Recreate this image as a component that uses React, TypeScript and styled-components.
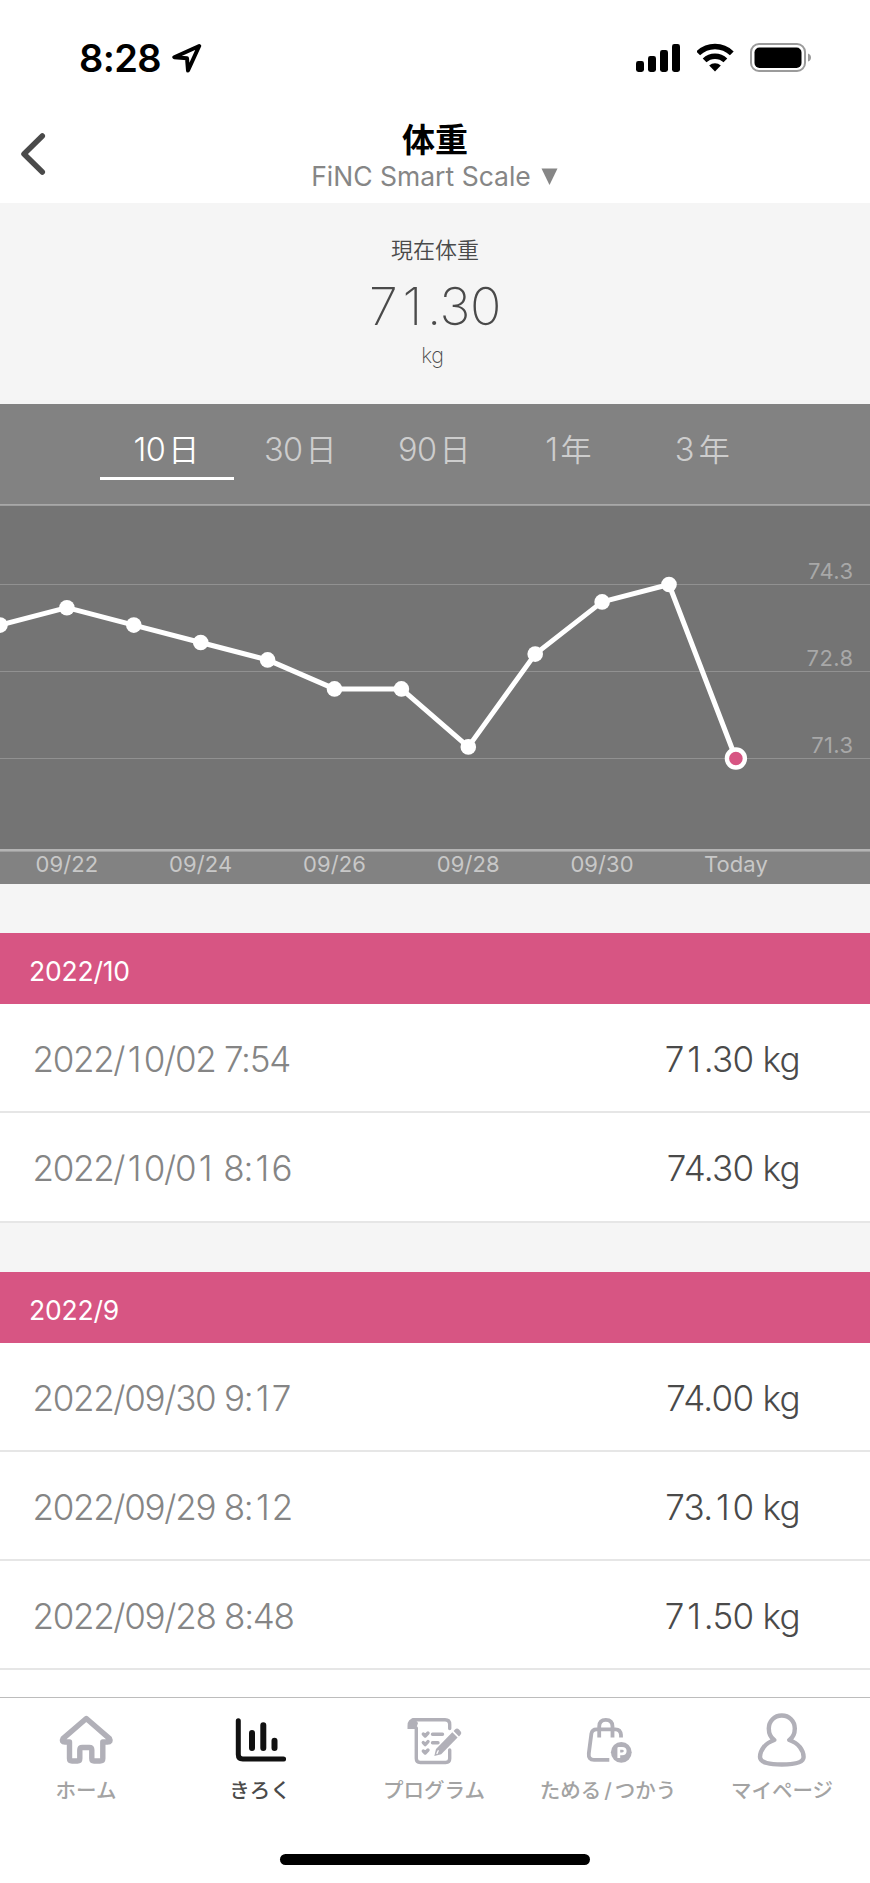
import React from 'react';
import styled, { createGlobalStyle } from 'styled-components';

const Global = createGlobalStyle`
  * { box-sizing: border-box; }
  body {
    margin: 0;
    background: #fff;
    font-family: Inter, 'Noto Sans CJK JP', sans-serif;
    -webkit-font-smoothing: antialiased;
  }
`;

const PINK = '#d75583';
const ICON_GRAY = '#b1b0b8';

const Screen = styled.div`
  width: 870px;
  height: 1883px;
  display: flex;
  flex-direction: column;
  overflow: hidden;
  background: #fff;
`;

/* Status bar */

const StatusBar = styled.div`
  height: 115px;
  flex: none;
  display: flex;
  justify-content: space-between;
  padding: 43px 58px 0 79px;
`;

const StatusGroup = styled.div<{ $gap?: number }>`
  display: flex;
  align-items: flex-start;
  gap: ${p => p.$gap ?? 0}px;
`;

const Clock = styled.span`
  font-size: 38px;
  line-height: 30px;
  font-weight: 600;
  letter-spacing: -0.6px;
  width: 93px;
  white-space: nowrap;
`;

/* Header */

const Header = styled.header`
  height: 88px;
  flex: none;
  display: grid;
  grid-template-columns: 120px 1fr 120px;
`;

const BackButton = styled.button`
  border: 0;
  background: none;
  padding: 17px 0 0 20px;
  display: flex;
  align-items: flex-start;
`;

const TitleBlock = styled.div`
  display: flex;
  flex-direction: column;
  align-items: center;
`;

const Title = styled.h1`
  margin: 6px 0 0;
  font-size: 33px;
  line-height: 38px;
  font-weight: 700;
`;

const DeviceLine = styled.div`
  display: flex;
  align-items: center;
  gap: 10px;
  margin-top: 2px;
  padding-right: 1px;
  font-size: 26.5px;
  line-height: 30px;
  color: #868686;
`;

/* Current value */

const Summary = styled.section`
  height: 201px;
  flex: none;
  background: #f5f5f5;
  color: #4a4a4a;
  display: flex;
  flex-direction: column;
  align-items: center;
`;

const SummaryLabel = styled.div`
  margin-top: 32px;
  font-size: 22px;
  line-height: 30px;
  font-weight: 350;
`;

const SummaryValue = styled.div`
  margin-top: 12px;
  font-size: 52px;
  line-height: 60px;
  font-weight: 200;
  letter-spacing: -0.4px;
`;

const SummaryUnit = styled.div`
  margin: 3px 5px 0 0;
  font-size: 21.5px;
  line-height: 30px;
  font-weight: 200;
  letter-spacing: -0.4px;
`;

/* Chart */

const ChartPanel = styled.section`
  height: 480px;
  flex: none;
  background: #828282;
`;

const RangeTabs = styled.div`
  height: 100px;
  padding: 16px 100px 0;
  display: grid;
  grid-template-columns: repeat(5, 134px);
`;

const RangeTab = styled.button<{ $active?: boolean }>`
  height: 60px;
  padding: 1px 2px 0 0;
  border: 0;
  border-bottom: 3px solid ${p => (p.$active ? '#fff' : 'transparent')};
  background: none;
  color: ${p => (p.$active ? '#fff' : '#cdcdcd')};
  font-family: inherit;
  font-size: 32.5px;
  font-weight: 350;
  line-height: 57px;
  letter-spacing: -0.6px;
  display: flex;
  justify-content: center;
`;

const RangeUnit = styled.span<{ $wide?: boolean }>`
  font-size: 31px;
  margin-left: ${p => (p.$wide ? 5 : 3)}px;
`;

const ChartSvg = styled.svg`
  display: block;
`;

/* History */

const History = styled.main`
  flex: 1;
  min-height: 0;
  overflow: hidden;
  background: #fff;
`;

const MonthHeader = styled.h2`
  margin: 0;
  height: 120px;
  border-top: 49px solid #f5f5f5;
  background: ${PINK};
  color: #fff;
  padding: 4px 29px 0;
  font-size: 26.5px;
  font-weight: 400;
  line-height: 68px;
  letter-spacing: -0.2px;
`;

const Row = styled.div`
  height: 109.3px;
  border-bottom: 2px solid #e6e6e6;
  padding: 3px 70px 0 32.5px;
  display: flex;
  justify-content: space-between;
  align-items: center;
  font-size: 35px;
  font-weight: 300;
`;

const RowDate = styled.span`
  color: #858585;
  letter-spacing: -1.3px;
`;

const RowValue = styled.span`
  color: #4a4a4a;
  letter-spacing: -0.7px;
`;

/* Gives the narrow "1" the same advance as the other digits. */
const One = styled.span`
  margin: 0 0.1em;
`;

const Figures = ({ children }: { children: string }) => (
  <>
    {children.split(/(1)/).map((part, i) => (part === '1' ? <One key={i}>1</One> : part))}
  </>
);

/* Bottom navigation */

const BottomNav = styled.nav`
  height: 186px;
  flex: none;
  border-top: 1px solid #bcbcbc;
  display: flex;
  flex-direction: column;
  align-items: center;
`;

const NavItems = styled.div`
  width: 870px;
  height: 156px;
  display: grid;
  grid-template-columns: 172px 176px 172px 176px 172px;
`;

const NavItem = styled.a<{ $active?: boolean }>`
  display: flex;
  flex-direction: column;
  align-items: center;
  font-size: 20.5px;
  font-weight: 500;
  line-height: 28px;
  white-space: nowrap;
  color: ${p => (p.$active ? '#4a4a4a' : '#a3a3a3')};
  svg { display: block; margin-bottom: 1px; }
`;

const Slash = styled.span`
  margin: 0 3px;
`;

const HomeIndicator = styled.div`
  width: 310px;
  height: 11px;
  border-radius: 6px;
  background: #000;
`;

const LocationIcon = () => (
  <svg width="30" height="30" viewBox="0 0 30 30" fill="none" stroke="#000" strokeWidth="4" strokeLinejoin="round">
    <path d="M27.2 3 L2.3 14.2 L15 15.2 L16 27.5 Z" />
  </svg>
);

const SignalIcon = () => (
  <svg width="45" height="30" viewBox="0 0 45 30">
    <rect x="0" y="18" width="8" height="11" rx="2.4" />
    <rect x="12" y="13" width="8" height="16" rx="2.4" />
    <rect x="24" y="7" width="8" height="22" rx="2.4" />
    <rect x="36" y="1" width="8" height="28" rx="2.4" />
  </svg>
);

const WifiIcon = () => (
  <svg width="38" height="30" viewBox="1 0 38 30" fill="none" stroke="#000" strokeWidth="5.4">
    <path d="M2.2 10.4 A24 24 0 0 1 35.8 10.4" />
    <path d="M8.6 17.4 A15 15 0 0 1 29.4 17.4" />
    <path d="M19 28.5 L13.2 22.6 A8.5 8.5 0 0 1 24.8 22.6 Z" fill="#000" stroke="none" />
  </svg>
);

const BatteryIcon = () => (
  <svg width="62" height="30" viewBox="0 0 62 30">
    <rect x="1" y="1" width="54" height="27" rx="8" fill="none" stroke="#9b9b9b" strokeWidth="2" />
    <rect x="4.5" y="4.5" width="47" height="20.5" rx="5" />
    <path d="M58 10.5 Q61 11.5 61 14.5 Q61 17.5 58 18.5 Z" fill="#9b9b9b" />
  </svg>
);

const HomeIcon = () => (
  <svg width="56" height="78" viewBox="0 0 56 78" fill="none" stroke={ICON_GRAY} strokeWidth="5.4" strokeLinejoin="round" strokeLinecap="round">
    <path d="M28.3 20.5 L5 40.6 Q3 44 7 44 H11.5 V60.5 Q11.5 63 14 63 H19.5 Q21.8 63 21.8 60.5 V52 Q21.8 49.5 24.3 49.5 H31.3 Q33.8 49.5 33.8 52 V60.5 Q33.8 63 36 63 H42 Q44.8 63 44.8 60.5 V44 H49.5 Q53.5 44 51.5 40.6 Z" />
  </svg>
);

const RecordIcon = () => (
  <svg width="52" height="78" viewBox="0 0 52 78" fill="none" stroke="#111" strokeLinecap="round" strokeLinejoin="round">
    <path d="M4.3 22.7 V56.5 Q4.3 61 8.8 61 H49.6" strokeWidth="5" />
    <path d="M18 35 V50 M29.3 27.3 V50 M40.5 42.7 V50" strokeWidth="6" />
  </svg>
);

const ProgramIcon = () => (
  <svg width="56" height="78" viewBox="0 0 56 78" fill="none" stroke={ICON_GRAY} strokeLinecap="round" strokeLinejoin="round" strokeWidth="3.4">
    <path d="M7 21.8 H39 Q43.7 21.8 43.7 26.5 V30.5 M43.7 52 V60.5 Q43.7 64.5 39.7 64.5 H14.3 Q10.3 64.5 10.3 60.5 V30" />
    <path d="M1.5 31 V28 Q1.5 20.3 8.5 20.3 L12 25 L10 31 Z" fill={ICON_GRAY} stroke="none" />
    <path d="M17.3 36 L19.2 38 L22 35 M17.3 44.6 L19.2 46.6 L22 43.6 M17.3 53 L19.2 55 L22 52 M26.5 36.3 H36.5 M26.5 44.7 H32" strokeWidth="3.4" />
    <path d="M28.3 58 L30 51 L46.3 34.2 L51.6 39.5 L35.2 56.3 Z" fill={ICON_GRAY} stroke="none" />
    <path d="M31 55.5 L32.2 52.8" stroke="#fff" strokeWidth="1.3" />
    <path d="M47.6 33 L49 31.6 Q51 29.6 53 31.6 L54.3 33 Q56.2 35 54.3 37 L53 38.4 Z" fill={ICON_GRAY} stroke="none" />
  </svg>
);

const BagIcon = () => (
  <svg width="48" height="78" viewBox="0 0 48 78" fill="none" stroke={ICON_GRAY} strokeLinejoin="round" strokeWidth="3.8">
    <path d="M37 39.5 V37 Q36.5 31.3 31.5 31.3 H12.5 Q8.2 31.3 7.4 35.5 L4.8 55.5 Q4.2 61.8 10 61.8 H25.3" />
    <path d="M15.2 39.5 V28.5 Q15.2 21.8 21.8 21.8 Q28.5 21.8 28.5 28.5 V39.5" />
    <circle cx="37.3" cy="54.3" r="10.4" fill={ICON_GRAY} stroke="none" />
    <path d="M34.8 60 V50.3 H38 Q41.2 50.3 41.2 53 Q41.2 55.8 38 55.8 H35" stroke="#fff" strokeWidth="2.8" />
  </svg>
);

const PersonIcon = () => (
  <svg width="52" height="78" viewBox="0 0 52 78" fill="none" stroke={ICON_GRAY} strokeLinejoin="round" strokeWidth="4.4">
    <path d="M18.3 42 C14.5 39.5 12.8 35.5 12.8 30.5 C12.8 23 18.4 17.5 25.8 17.5 C33.2 17.5 38.8 23 38.8 30.5 C38.8 35.5 37.1 39.5 33.3 42 C42.5 45 47.6 52.5 47.6 59 C47.6 65 37 66.5 25.8 66.5 C14.6 66.5 4 65 4 59 C4 52.5 9.1 45 18.3 42 Z" />
  </svg>
);

const ranges = [
  { n: '10', unit: '日' },
  { n: '30', unit: '日' },
  { n: '90', unit: '日' },
  { n: '1', unit: '年' },
  { n: '3', unit: '年' },
];

const STEP = 66.9;
const yOf = (kg: number) => 80.5 + (74.3 - kg) * 58;
const weights = [73.6, 73.9, 73.6, 73.3, 73.0, 72.5, 72.5, 71.5, 73.1, 74.0, 74.3, 71.3];
const points = weights.map((kg, i) => ({ x: i * STEP, y: yOf(kg) }));
const last = points[points.length - 1];
const gridValues = [74.3, 72.8, 71.3];
const dateLabels = ['09/22', '09/24', '09/26', '09/28', '09/30', 'Today'];

const WeightChart = () => (
  <ChartSvg width="870" height="380" viewBox="0 0 870 380">
    <rect x="0" y="0" width="870" height="347" fill="#747474" />
    <rect x="0" y="0" width="870" height="1.8" fill="#a8a8a8" />
    {gridValues.map(v => (
      <g key={v}>
        <line x1="0" x2="870" y1={yOf(v)} y2={yOf(v)} stroke="#919191" strokeWidth="1.2" />
        <text x="853.5" y={yOf(v) - 5.3} textAnchor="end" fill="#a8a8a8" fontSize="22" letterSpacing="0.4">
          {v.toFixed(1)}
        </text>
      </g>
    ))}
    <rect x="0" y="345" width="870" height="2.6" fill="#b4b4b4" />
    <polyline points={points.map(p => `${p.x},${p.y}`).join(' ')} fill="none" stroke="#fff" strokeWidth="5" strokeLinejoin="round" />
    {points.slice(0, -1).map(p => (
      <circle key={p.x} cx={p.x} cy={p.y} r="7.8" fill="#fff" />
    ))}
    <circle cx={last.x} cy={last.y} r="9" fill={PINK} stroke="#fff" strokeWidth="4.4" />
    {dateLabels.map((d, i) => (
      <text key={d} x={STEP * (2 * i + 1)} y="367.6" textAnchor="middle" fill="#c8c8c8" fontSize="22" letterSpacing="0.1">
        {d}
      </text>
    ))}
  </ChartSvg>
);

const months = [
  {
    label: '2022/10',
    rows: [
      ['2022/10/02 7:54', '71.30 kg'],
      ['2022/10/01 8:16', '74.30 kg'],
    ],
  },
  {
    label: '2022/9',
    rows: [
      ['2022/09/30 9:17', '74.00 kg'],
      ['2022/09/29 8:12', '73.10 kg'],
      ['2022/09/28 8:48', '71.50 kg'],
    ],
  },
];

export default function App() {
  return (
    <>
      <Global />
      <Screen>
        <StatusBar>
          <StatusGroup>
            <Clock>8:28</Clock>
            <LocationIcon />
          </StatusGroup>
          <StatusGroup $gap={15.5}>
            <SignalIcon />
            <WifiIcon />
            <BatteryIcon />
          </StatusGroup>
        </StatusBar>
        <Header>
          <BackButton aria-label="戻る">
            <svg width="28" height="46" viewBox="0 0 28 46" fill="none" stroke="#4a4a4a" strokeWidth="5.5" strokeLinecap="round" strokeLinejoin="round">
              <path d="M22.3 4 L4 22 L22.3 40" />
            </svg>
          </BackButton>
          <TitleBlock>
            <Title>体重</Title>
            <DeviceLine>
              FiNC Smart Scale
              <svg width="17" height="17" viewBox="0 0 17 17" fill="#868686">
                <path d="M0.5 0.5 H16.5 L8.5 17 Z" />
              </svg>
            </DeviceLine>
          </TitleBlock>
        </Header>
        <Summary>
          <SummaryLabel>現在体重</SummaryLabel>
          <SummaryValue><Figures>71.30</Figures></SummaryValue>
          <SummaryUnit>kg</SummaryUnit>
        </Summary>
        <ChartPanel>
          <RangeTabs>
            {ranges.map((r, i) => (
              <RangeTab key={r.n} $active={i === 0}>
                <span>{r.n}</span>
                <RangeUnit $wide={r.n === '3'}>{r.unit}</RangeUnit>
              </RangeTab>
            ))}
          </RangeTabs>
          <WeightChart />
        </ChartPanel>
        <History>
          {months.map(m => (
            <section key={m.label}>
              <MonthHeader>{m.label}</MonthHeader>
              {m.rows.map(([date, value]) => (
                <Row key={date}>
                  <RowDate><Figures>{date}</Figures></RowDate>
                  <RowValue><Figures>{value}</Figures></RowValue>
                </Row>
              ))}
            </section>
          ))}
        </History>
        <BottomNav>
          <NavItems>
            <NavItem><HomeIcon />ホーム</NavItem>
            <NavItem $active><RecordIcon />きろく</NavItem>
            <NavItem><ProgramIcon />プログラム</NavItem>
            <NavItem><BagIcon /><span>ためる<Slash>/</Slash>つかう</span></NavItem>
            <NavItem><PersonIcon />マイページ</NavItem>
          </NavItems>
          <HomeIndicator />
        </BottomNav>
      </Screen>
    </>
  );
}
